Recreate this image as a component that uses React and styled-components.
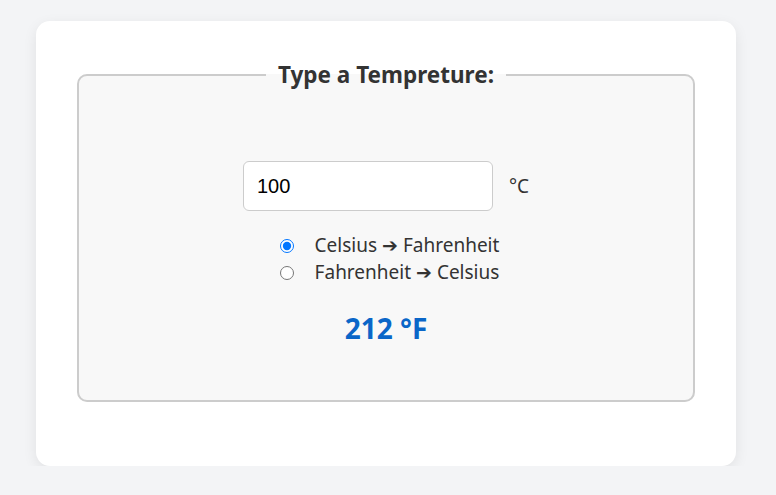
import { useState } from "react";
import styled, { createGlobalStyle } from "styled-components";

const GlobalStyle = createGlobalStyle`
  body {
    margin: 0;
    background: #f3f4f6;
    font-family: "Noto Sans", "Open Sans", sans-serif;
    color: #333;
  }
`;

const Card = styled.div`
  width: 700px;
  box-sizing: border-box;
  margin: 21px 0 0 36px;
  padding: 40px 41px 64px;
  background: #fff;
  border-radius: 14px;
  box-shadow: 0 4px 14px rgba(0, 0, 0, 0.08);
`;

const Fieldset = styled.fieldset`
  margin: 0;
  padding: 72px 20px 56px;
  border: 2px solid #ccc;
  border-radius: 10px;
  background: #f8f8f8;
  display: flex;
  flex-direction: column;
  align-items: center;
`;

const Legend = styled.legend`
  margin: 0 auto;
  padding: 0 12px;
  font-size: 22.5px;
  line-height: 28px;
  font-weight: 700;
  color: #333;
`;

const InputRow = styled.div`
  display: flex;
  align-items: center;
  gap: 16px;
`;

const TempInput = styled.input`
  width: 250px;
  height: 50px;
  box-sizing: border-box;
  padding: 0 13px;
  border: 1px solid #ccc;
  border-radius: 6px;
  background: #fff;
  font-family: "Liberation Sans", Arial, sans-serif;
  font-size: 20px;
  color: #000;
  outline: none;
`;

const Unit = styled.span`
  font-size: 19px;
`;

const RadioGroup = styled.div`
  margin-top: 21px;
  display: flex;
  flex-direction: column;
`;

const RadioLabel = styled.label`
  display: flex;
  align-items: center;
  gap: 18px;
  font-size: 19px;
  line-height: 27px;
  color: #333;

  input {
    margin: 0 3px 0 7px;
    width: 14px;
    height: 14px;
  }
`;

const Result = styled.div`
  margin-top: 26px;
  font-size: 28px;
  line-height: 32px;
  font-weight: 700;
  color: #0a66c8;
`;

export default function App() {
  const [value, setValue] = useState("100");
  const [mode, setMode] = useState("c2f");

  const num = parseFloat(value);
  let result = "";
  if (!isNaN(num)) {
    result =
      mode === "c2f"
        ? `${Math.round((num * 9) / 5 + 32)} °F`
        : `${Math.round(((num - 32) * 5) / 9)} °C`;
  }

  return (
    <>
      <GlobalStyle />
      <Card>
        <Fieldset>
          <Legend>Type a Tempreture:</Legend>
          <InputRow>
            <TempInput
              type="text"
              value={value}
              onChange={(e) => setValue(e.target.value)}
            />
            <Unit>{mode === "c2f" ? "°C" : "°F"}</Unit>
          </InputRow>
          <RadioGroup>
            <RadioLabel>
              <input
                type="radio"
                name="mode"
                checked={mode === "c2f"}
                onChange={() => setMode("c2f")}
              />
              Celsius ➔ Fahrenheit
            </RadioLabel>
            <RadioLabel>
              <input
                type="radio"
                name="mode"
                checked={mode === "f2c"}
                onChange={() => setMode("f2c")}
              />
              Fahrenheit ➔ Celsius
            </RadioLabel>
          </RadioGroup>
          <Result>{result}</Result>
        </Fieldset>
      </Card>
    </>
  );
}
